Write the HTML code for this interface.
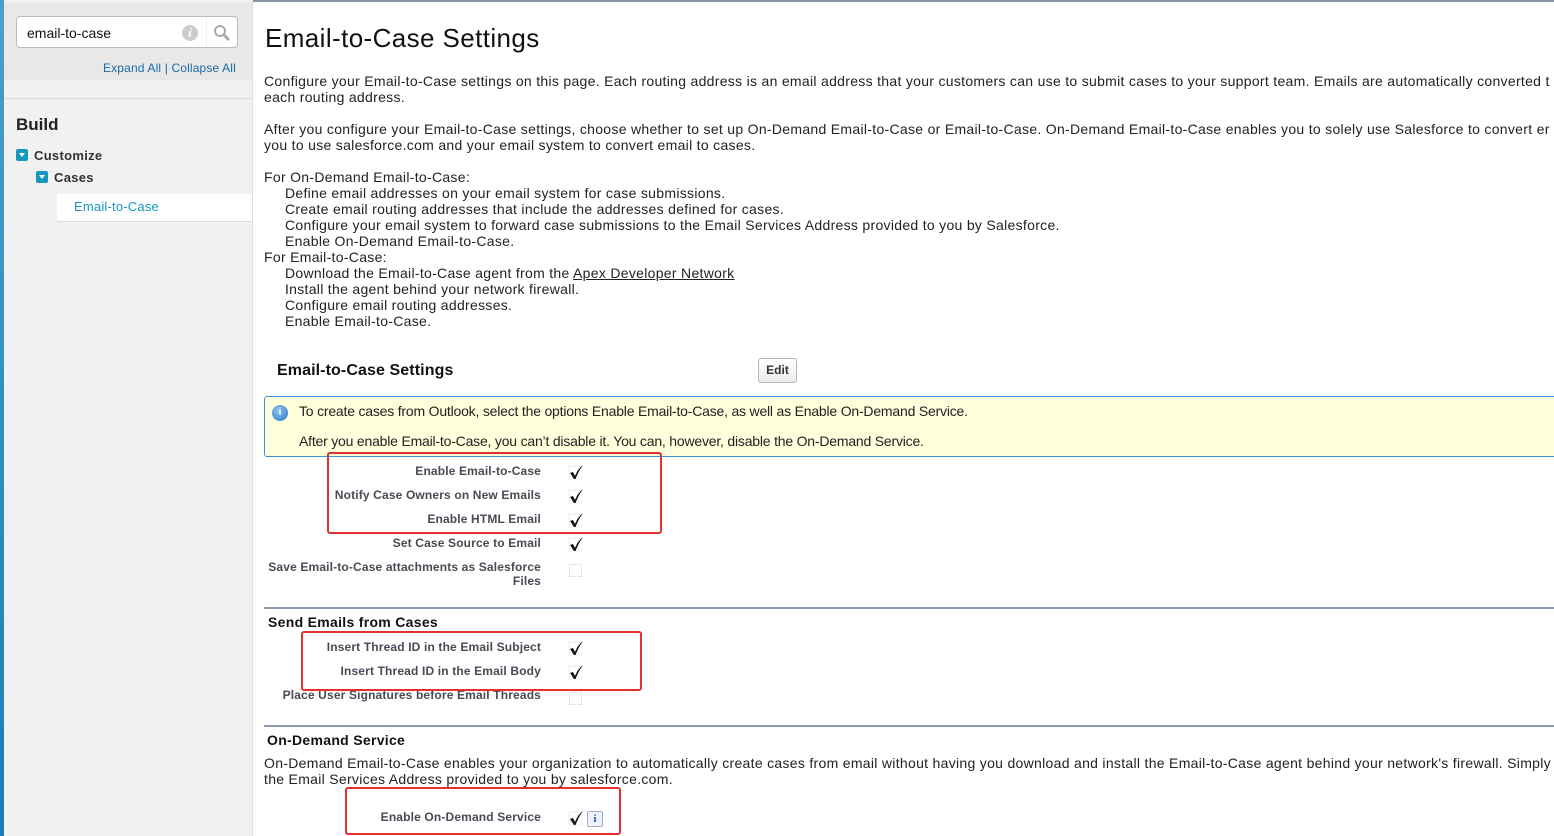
<!DOCTYPE html><html><head><style>
body{margin:0;width:1554px;height:836px;overflow:hidden;font-family:"Liberation Sans",Arial,sans-serif;background:#fff;position:relative;color:#222}
#w{position:absolute;left:0;top:0;width:1554px;height:836px;overflow:hidden}
.a{position:absolute;white-space:nowrap}
.side{position:absolute;left:0;top:0;width:252px;height:836px;background:#f1f1f1;border-right:1px solid #ddd}
.strip{position:absolute;left:0;top:0;width:4px;height:836px;background:linear-gradient(#4aa0c8,#1b7fb0)}
.p{font-size:14px;line-height:16px;color:#222;letter-spacing:.3px}
.lab{position:absolute;width:300px;text-align:right;font-size:12px;font-weight:bold;color:#4a4a56;letter-spacing:.15px}
.ck{position:absolute;left:568px;width:16px;height:16px}
.box{position:absolute;left:569px;width:11px;height:11px;border:1px dotted #ccc}
.red{position:absolute;border:2px solid #e53030;border-radius:3px}
.sq{display:inline-block;width:12px;height:12px;background:#1797c0;border-radius:2px;vertical-align:-1px;margin-right:6px;position:relative}
.sq:after{content:"";position:absolute;left:3px;top:4px;border:3px solid transparent;border-top:4px solid #fff;border-bottom:0}
</style></head><body><div id="w">
<svg width="0" height="0" style="position:absolute"><defs><symbol id="c" viewBox="0 0 16 16"><rect x="1" y="2" width="13" height="13" fill="none" stroke="#ddd" stroke-dasharray="1 1"/><path d="M2 9 L5 8 L7 12 C9 7 12 3 15 1 C12 5 10 9 7.5 15 L6 15 Z" fill="#111"/></symbol></defs></svg>
<div class="a" style="left:0;top:0;width:1554px;height:2px;background:#8a93a6"></div>
<div class="side"></div><div class="strip"></div>
<div class="a" style="left:4px;top:2px;width:248px;height:78px;background:#e8e8e8"></div>
<div class="a" style="left:16px;top:16px;width:220px;height:30px;background:#fff;border:1px solid #bbb;border-radius:4px"></div>
<div class="a" style="left:27px;top:25px;font-size:14px;color:#111">email-to-case</div>
<div class="a" style="left:182px;top:25px;width:16px;height:16px;border-radius:50%;background:#ccc;color:#fff;font-size:12px;font-style:italic;font-weight:bold;text-align:center;line-height:16px">i</div>
<div class="a" style="left:206px;top:17px;width:1px;height:30px;border-left:1px dotted #ddd"></div>
<svg class="a" style="left:213px;top:24px" width="18" height="18"><circle cx="7" cy="7" r="5" fill="none" stroke="#aaa" stroke-width="2"/><path d="M11 11l5 5" stroke="#aaa" stroke-width="3"/></svg>
<div class="a" style="left:103px;top:61px;font-size:12px;color:#1a6aa8;letter-spacing:.15px">Expand All | Collapse All</div>
<div class="a" style="left:4px;top:98px;width:248px;height:1px;background:#ddd"></div>
<div class="a" style="left:16px;top:115px;font-size:17px;font-weight:bold;color:#222">Build</div>
<div class="a" style="left:16px;top:148px;font-size:13px;font-weight:bold;color:#333;letter-spacing:.3px"><span class="sq"></span>Customize</div>
<div class="a" style="left:36px;top:170px;font-size:13px;font-weight:bold;color:#333;letter-spacing:.3px"><span class="sq"></span>Cases</div>
<div class="a" style="left:57px;top:194px;width:195px;height:27px;background:#fff;border-bottom:1px solid #ddd"></div>
<div class="a" style="left:74px;top:199px;font-size:13px;color:#1797c0;letter-spacing:.2px">Email-to-Case</div>

<div class="a" style="left:265px;top:23px;font-size:26px;color:#111;letter-spacing:.4px">Email-to-Case Settings</div>
<div class="a p" style="left:264px;top:73px">Configure your Email-to-Case settings on this page. Each routing address is an email address that your customers can use to submit cases to your support team. Emails are automatically converted t<br>each routing address.</div>
<div class="a p" style="left:264px;top:121px">After you configure your Email-to-Case settings, choose whether to set up On-Demand Email-to-Case or Email-to-Case. On-Demand Email-to-Case enables you to solely use Salesforce to convert er<br>you to use salesforce.com and your email system to convert email to cases.</div>
<div class="a p" style="left:264px;top:169px">For On-Demand Email-to-Case:<br>&nbsp;&nbsp;&nbsp;&nbsp;&nbsp;Define email addresses on your email system for case submissions.<br>&nbsp;&nbsp;&nbsp;&nbsp;&nbsp;Create email routing addresses that include the addresses defined for cases.<br>&nbsp;&nbsp;&nbsp;&nbsp;&nbsp;Configure your email system to forward case submissions to the Email Services Address provided to you by Salesforce.<br>&nbsp;&nbsp;&nbsp;&nbsp;&nbsp;Enable On-Demand Email-to-Case.<br>For Email-to-Case:<br>&nbsp;&nbsp;&nbsp;&nbsp;&nbsp;Download the Email-to-Case agent from the <u>Apex Developer Network</u><br>&nbsp;&nbsp;&nbsp;&nbsp;&nbsp;Install the agent behind your network firewall.<br>&nbsp;&nbsp;&nbsp;&nbsp;&nbsp;Configure email routing addresses.<br>&nbsp;&nbsp;&nbsp;&nbsp;&nbsp;Enable Email-to-Case.</div>

<div class="a" style="left:277px;top:362px;font-size:16px;font-weight:bold;color:#111;letter-spacing:.1px">Email-to-Case Settings</div>
<div class="a" style="left:758px;top:358px;width:37px;height:23px;border:1px solid #b5b5b5;border-radius:3px;background:linear-gradient(#fff,#ececec);font-size:12px;font-weight:bold;color:#333;text-align:center;line-height:23px">Edit</div>
<div class="a" style="left:264px;top:396px;width:1300px;height:59px;background:#ffffdc;border:1px solid #3a8fd6;border-radius:3px"></div>
<div class="a" style="left:272px;top:405px;width:16px;height:16px;border-radius:50%;background:radial-gradient(circle at 40% 35%,#8cc4f2,#2a75c8);color:#fff;font-size:10px;font-weight:bold;text-align:center;line-height:16px">i</div>
<div class="a" style="left:299px;top:403px;font-size:14px;letter-spacing:-.2px">To create cases from Outlook, select the options Enable Email-to-Case, as well as Enable On-Demand Service.</div>
<div class="a" style="left:299px;top:433px;font-size:14px;letter-spacing:-.2px">After you enable Email-to-Case, you can’t disable it. You can, however, disable the On-Demand Service.</div>

<div class="lab" style="left:241px;top:464px">Enable Email-to-Case</div><svg class="ck" style="top:464px"><use href="#c"/></svg>
<div class="lab" style="left:241px;top:488px">Notify Case Owners on New Emails</div><svg class="ck" style="top:488px"><use href="#c"/></svg>
<div class="lab" style="left:241px;top:512px">Enable HTML Email</div><svg class="ck" style="top:512px"><use href="#c"/></svg>
<div class="lab" style="left:241px;top:536px">Set Case Source to Email</div><svg class="ck" style="top:536px"><use href="#c"/></svg>
<div class="lab" style="left:241px;top:560px">Save Email-to-Case attachments as Salesforce<br>Files</div><div class="box" style="top:564px"></div>
<div class="red" style="left:327px;top:452px;width:331px;height:78px"></div>

<div class="a" style="left:264px;top:607px;width:1300px;height:2px;background:#8a9ab0"></div>
<div class="a" style="left:268px;top:614px;font-size:14px;font-weight:bold;color:#111;letter-spacing:.3px">Send Emails from Cases</div>
<div class="lab" style="left:241px;top:640px">Insert Thread ID in the Email Subject</div><svg class="ck" style="top:640px"><use href="#c"/></svg>
<div class="lab" style="left:241px;top:664px">Insert Thread ID in the Email Body</div><svg class="ck" style="top:664px"><use href="#c"/></svg>
<div class="lab" style="left:241px;top:688px">Place User Signatures before Email Threads</div><div class="box" style="top:692px"></div>
<div class="red" style="left:301px;top:631px;width:337px;height:56px"></div>

<div class="a" style="left:264px;top:725px;width:1300px;height:2px;background:#8a9ab0"></div>
<div class="a" style="left:267px;top:732px;font-size:14px;font-weight:bold;color:#111;letter-spacing:.3px">On-Demand Service</div>
<div class="a p" style="left:264px;top:755px">On-Demand Email-to-Case enables your organization to automatically create cases from email without having you download and install the Email-to-Case agent behind your network's firewall. Simply configure your er<br>the Email Services Address provided to you by salesforce.com.</div>
<div class="lab" style="left:241px;top:810px">Enable On-Demand Service</div><svg class="ck" style="top:810px"><use href="#c"/></svg>
<div class="a" style="left:587px;top:811px;width:14px;height:14px;border:1px solid #aac;border-radius:2px;background:#eef3fa;color:#1a5fb0;font-size:11px;font-weight:bold;text-align:center;line-height:14px;font-family:'Liberation Serif',serif">i</div>
<div class="red" style="left:345px;top:787px;width:272px;height:44px"></div>
</div></body></html>
